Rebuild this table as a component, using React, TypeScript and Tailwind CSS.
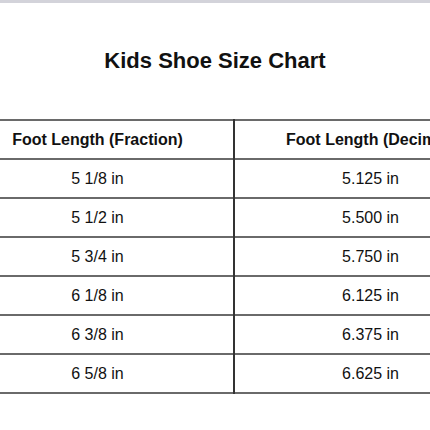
const ROWS = [
  ["5 1/8 in", "5.125 in"],
  ["5 1/2 in", "5.500 in"],
  ["5 3/4 in", "5.750 in"],
  ["6 1/8 in", "6.125 in"],
  ["6 3/8 in", "6.375 in"],
  ["6 5/8 in", "6.625 in"],
];

export default function App() {
  return (
    <div className="w-[430px] h-[430px] overflow-hidden bg-white font-['Liberation_Sans',Arial,sans-serif] text-[#111]">
      <div className="h-[3px] bg-[#d3d3da]" />
      <h1 className="h-[116px] flex items-center justify-center pb-[1px] text-[22px] font-bold">
        Kids Shoe Size Chart
      </h1>
      <table className="ml-[-38px] w-[544px] border-collapse table-fixed text-[16px]">
        <thead>
          <tr className="h-[39px] border-t-2 border-b-2 border-[#6a6a6a]">
            <th className="w-[272px] font-bold text-center border-r-2 border-r-[#333]">Foot Length (Fraction)</th>
            <th className="w-[272px] font-bold text-center">Foot Length (Decimal)</th>
          </tr>
        </thead>
        <tbody>
          {ROWS.map(([frac, dec]) => (
            <tr key={frac} className="h-[39px] border-b-2 border-[#6a6a6a]">
              <td className="text-center border-r-2 border-r-[#333]">{frac}</td>
              <td className="text-center">{dec}</td>
            </tr>
          ))}
        </tbody>
      </table>
    </div>
  );
}
